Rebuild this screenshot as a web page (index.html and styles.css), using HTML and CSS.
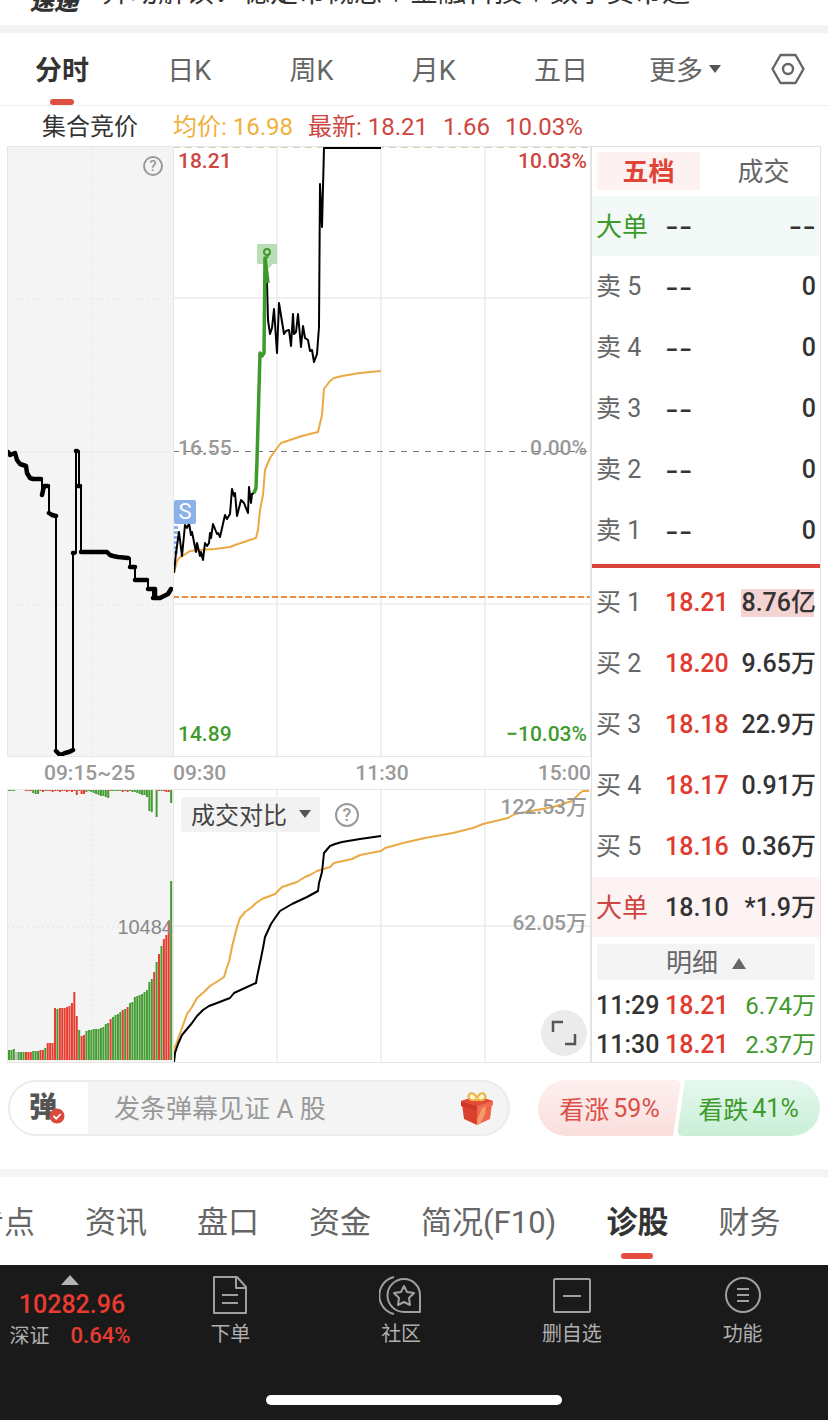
FILE: index.html
```html
<!DOCTYPE html>
<html lang="zh-CN">
<head>
<meta charset="utf-8">
<meta name="viewport" content="width=device-width, initial-scale=1">
<title>分时行情</title>
<link rel="stylesheet" href="styles.css">
</head>
<body>
<div class="page">
  <header class="news">
    <strong class="news-tag">速递</strong>
    <span class="news-text">异动解读：稳定币概念＋金融科技＋数字货币通</span>
  </header>

  <nav class="periods" aria-label="周期">
    <div class="period-list">
      <button class="period active">分时</button>
      <button class="period">日K</button>
      <button class="period">周K</button>
      <button class="period">月K</button>
      <button class="period">五日</button>
    </div>
    <button class="period more">更多<svg width="14" height="11" viewBox="0 0 14 11"><path d="M1 2H13L7 10Z" fill="#555"/></svg></button>
    <button class="settings" aria-label="设置">
      <svg width="34" height="32" viewBox="0 0 34 32" fill="none" stroke="#666" stroke-width="2.4" stroke-linejoin="round"><path d="M9.500 2H24.500L32.500 16L24.500 30H9.500L1.500 16Z"/><circle cx="17" cy="16" r="5"/></svg>
    </button>
  </nav>

  <div class="legend">
    <span class="legend-auction">集合竞价</span>
    <span class="avg">均价: 16.98</span>
    <span class="up">最新: 18.21</span>
    <span class="up">1.66</span>
    <span class="up">10.03%</span>
  </div>

  <main class="market">
    <section class="panel auction">
      <svg class="plot" viewBox="8 147 165 609" preserveAspectRatio="none">
        <g stroke="#e6e6e6" stroke-dasharray="2 3"><path d="M92 147V757M7 299H173M7 605H173"/></g>
        <path d="M7 452H173" stroke="#e9e9e9"/>
        <g fill="none" stroke="#000" stroke-linejoin="round" stroke-linecap="round">
          <path stroke-width="2" d="M42 479V495M49 486V513M56 516V751M73 751V553M76 553V451M79 451V486M81 486V552M130 558V567M135 567V580M148 580V589M153 590V598"/>
          <path stroke-width="4.500" d="M8 452L10 455L15 453L17 460L20 464L26 466L27 473L30 478L33 479H41M42 495L44 486H48M49 513L52 515L56 516M56 751L60 755L65 753L69 752L73 750M73 553H74M76 451H77M78 486H80M81 552H107L110 555L113 556L118 557L128 558M130 567H135M135 580H147M148 589H155V596M153 598H160L164 596L168 594L171 589"/>
        </g>
      </svg>
      <button class="help help-small" aria-label="集合竞价说明">?</button>
    </section>

    <section class="panel price">
      <svg class="plot" viewBox="174 147 416 609" preserveAspectRatio="none" fill="none">
        <path stroke="#ebebeb" stroke-width="1.500" d="M277 147V757M381 147V757M485 147V757M173 298H591M173 604H591"/>
        <path stroke="#dccfb4" stroke-width="2" stroke-dasharray="7 5" d="M173 147H591"/>
        <path stroke="#777" stroke-width="1.200" stroke-dasharray="6 6" d="M173 451.500H591"/>
        <path stroke="#ef8b3c" stroke-width="2" stroke-dasharray="6 3" d="M173 597H591"/>
        <path stroke="#eaa943" stroke-width="2" stroke-linejoin="round" d="M174 573L177 561L180 557L184 555L190 551L200 550L215 549L230 547L235 545L244 542L256 538L258 530L260 510L263 495L265 470L270 458L277 448L281 443L302 436L318 432L322 415L324 389L330 381L334 378L342 376L360 373L381 371"/>
        <path stroke="#8db4ea" stroke-width="4" stroke-dasharray="3 2" d="M176 526V555"/>
        <path stroke="#000" stroke-width="2" stroke-linejoin="round" d="M174 573L176 553L179 532L182 556L185 525L187 528L189 523L191 535L192 532L196 552L197 543L200 556L201 552L203 560L205 543L207 546L209 543L210 533L211 538L213 524L217 534L218 533L220 537L225 515L227 519L230 514L232 489L234 496L235 493L237 516L241 500L244 503L248 513L249 487L251 503L252 494L254 493"/>
        <path stroke="#000" stroke-width="2" stroke-linejoin="round" d="M267 283L268 320L270 334L272 328L274 309L277 353L279 303L284 334L286 331L289 330L291 346L293 314L294 334L296 332L298 314L301 347L303 326L305 338L308 340L310 351L312 350L314 362L317 354L319 327L320 184L322 227L324 148H381"/>
        <rect x="257" y="244" width="20" height="20" rx="1" fill="#b9ddb5"/><path d="M265 264H273L268 269Z" fill="#b9ddb5"/>
        <circle cx="267" cy="252" r="3" stroke="#3f9a2c" stroke-width="2"/><path d="M269 254L266 259" stroke="#3f9a2c" stroke-width="2"/>
        <path stroke="#3f9a2c" stroke-width="3.500" stroke-linejoin="round" d="M254 493L256 488L257 460L260 353L262 356L264 353L265 258L268 283"/>
      </svg>
      <span class="tag at-top at-left up">18.21</span>
      <span class="tag at-top at-right up">10.03%</span>
      <span class="tag at-mid at-left flat">16.55</span>
      <span class="tag at-mid at-right flat">0.00%</span>
      <span class="tag at-bottom at-left down">14.89</span>
      <span class="tag at-bottom at-right down">−10.03%</span>
      <span class="sell-mark">S</span>
    </section>

    <div class="axis axis-auction"><span>09:15~25</span></div>
    <div class="axis axis-day"><span>09:30</span><span>11:30</span><span>15:00</span></div>

    <section class="panel auction-volume">
      <svg class="plot" viewBox="8 790 165 272" preserveAspectRatio="none">
        <path stroke="#e4e4e4" stroke-dasharray="2 3" d="M92 789V1063M7 927H173"/>
        <g id="volume-bars"></g>
      </svg>
      <span class="volume-tag">10484</span>
    </section>

    <section class="panel compare">
      <svg class="plot" viewBox="174 790 416 272" preserveAspectRatio="none" fill="none">
        <path stroke="#ebebeb" stroke-width="1.500" d="M277 789V1063M381 789V1063M485 789V1063M173 926H591"/>
        <path stroke="#eaa943" stroke-width="2" stroke-linejoin="round" d="M174 1062L175 1047L182 1028L187 1014L192 1007L197 998L204 992L210 986L218 981L224 977L227 967L229 962L232 947L237 927L240 918L245 912L252 907L256 903L262 899L275 894L282 887L297 882L305 877L310 875L317 871L330 867L334 863L352 859L360 855L381 851L385 848L403 843L425 838L453 833L473 828L483 824L508 818L515 814L553 807L572 801L580 793L583 791H589"/>
        <path stroke="#000" stroke-width="2" stroke-linejoin="round" d="M174 1062L175 1053L178 1044L182 1035L192 1023L197 1016L203 1010L209 1006L217 1003L230 998L234 993L256 983L257 977L261 958L263 948L265 937L271 924L275 918L280 911L292 904L307 897L318 891L319 883L322 872L324 853L330 846L335 844L342 842L360 839L381 836"/>
      </svg>
      <div class="compare-tools">
        <button class="compare-pick">成交对比<svg width="14" height="10" viewBox="0 0 14 10"><path d="M1 1H13L7 9Z" fill="#555"/></svg></button>
        <button class="help" aria-label="成交对比说明">?</button>
      </div>
      <span class="tag compare-top at-right flat">122.53万</span>
      <span class="tag compare-mid at-right flat">62.05万</span>
      <button class="expand" aria-label="全屏"><svg width="26" height="26" viewBox="0 0 26 26" fill="none" stroke="#555" stroke-width="2.500"><path d="M2 12V2H12M24 14V24H14"/></svg></button>
    </section>

    <aside class="book">
      <div class="book-tabs">
        <button class="book-tab active">五档</button>
        <button class="book-tab">成交</button>
      </div>
      <table class="quotes">
        <tbody>
          <tr class="big big-sell"><th scope="row">大单</th><td class="none">--</td><td class="none">--</td></tr>
          <tr><th scope="row">卖 5</th><td class="none">--</td><td>0</td></tr>
          <tr><th scope="row">卖 4</th><td class="none">--</td><td>0</td></tr>
          <tr><th scope="row">卖 3</th><td class="none">--</td><td>0</td></tr>
          <tr><th scope="row">卖 2</th><td class="none">--</td><td>0</td></tr>
          <tr><th scope="row">卖 1</th><td class="none">--</td><td>0</td></tr>
        </tbody>
      </table>
      <div class="spread"></div>
      <table class="quotes">
        <tbody>
          <tr><th scope="row">买 1</th><td class="bid">18.21</td><td><span class="flash">8.76亿</span></td></tr>
          <tr><th scope="row">买 2</th><td class="bid">18.20</td><td>9.65万</td></tr>
          <tr><th scope="row">买 3</th><td class="bid">18.18</td><td>22.9万</td></tr>
          <tr><th scope="row">买 4</th><td class="bid">18.17</td><td>0.91万</td></tr>
          <tr><th scope="row">买 5</th><td class="bid">18.16</td><td>0.36万</td></tr>
          <tr class="big big-buy"><th scope="row">大单</th><td>18.10</td><td>*1.9万</td></tr>
        </tbody>
      </table>
      <button class="details">明细<svg width="14" height="11" viewBox="0 0 14 11"><path d="M7 0L14 11H0Z" fill="#666"/></svg></button>
      <table class="quotes trades">
        <tbody>
          <tr><td>11:29</td><td class="bid">18.21</td><td class="down">6.74万</td></tr>
          <tr><td>11:30</td><td class="bid">18.21</td><td class="down">2.37万</td></tr>
        </tbody>
      </table>
    </aside>
  </main>

  <section class="social">
    <div class="danmu">
      <button class="danmu-toggle" aria-label="弹幕开关">弹<svg class="check" width="16" height="16" viewBox="0 0 16 16"><circle cx="8" cy="8" r="7.500" fill="#dc4a3b"/><path d="M4.500 8L7.200 10.700L11.700 6" fill="none" stroke="#fff" stroke-width="1.800"/></svg></button>
      <input class="danmu-input" type="text" aria-label="发弹幕" placeholder="发条弹幕见证 A 股">
      <button class="gift" aria-label="礼物">
        <svg width="34" height="36" viewBox="0 0 34 36">
          <path d="M2 14L17 19V35L4 29Z" fill="#d9412f"/><path d="M32 14L17 19V35L30 29Z" fill="#ef6647"/>
          <path d="M1 11L17 6L33 11V15L17 21L1 15Z" fill="#ef6a50"/><path d="M1 11L17 16L33 11L17 6Z" fill="#e34b39"/><path d="M1 11L17 16V21L1 16Z" fill="#cf3829"/>
          <path d="M22 18L26 16.500L25 24L20 34L17 35V30Z" fill="#f59a6c"/>
          <path d="M17 9C12 12 7 9 9 5C11 1 16 4 17 9C18 4 23 1 25 5C27 9 22 12 17 9Z" fill="#fff2d5" stroke="#e9b13d" stroke-width="2"/><circle cx="17" cy="9" r="2" fill="#f1c654"/>
        </svg>
      </button>
    </div>
    <div class="votes">
      <button class="vote bull">看涨<span>59%</span></button>
      <button class="vote bear">看跌<span>41%</span></button>
    </div>
  </section>

  <nav class="sections" aria-label="栏目">
    <a class="section-link" href="#">看点</a>
    <a class="section-link" href="#">资讯</a>
    <a class="section-link" href="#">盘口</a>
    <a class="section-link" href="#">资金</a>
    <a class="section-link" href="#">简况(F10)</a>
    <a class="section-link active" href="#">诊股</a>
    <a class="section-link" href="#">财务</a>
  </nav>

  <footer class="dock">
    <div class="dock-row">
      <button class="index">
        <svg width="18" height="10" viewBox="0 0 18 10"><path d="M9 0L18 10H0Z" fill="#b4b4b4"/></svg>
        <span class="index-value">10282.96</span>
        <span class="index-line"><span class="index-name">深证</span><span class="index-change">0.64%</span></span>
      </button>
      <button class="dock-item">
        <svg width="40" height="40" viewBox="0 0 40 40"><path d="M4 2H27L36 12V38H4ZM26 2V13H36M12 20H28M12 28H28"/></svg>下单
      </button>
      <button class="dock-item">
        <svg width="44" height="40" viewBox="0 0 44 40"><path d="M15 2A19 19 0 0 0 15 39M25 4A16.500 16.500 0 1 0 25 37H41V20A16 16 0 0 0 25 4Z"/><path d="M25 11L28 17L35 18L30 23L31 30L25 27L19 30L20 23L15 18L22 17Z"/></svg>社区
      </button>
      <button class="dock-item">
        <svg width="40" height="40" viewBox="0 0 40 40"><rect x="2" y="4" width="36" height="33" rx="1"/><path d="M11 21H29"/></svg>删自选
      </button>
      <button class="dock-item">
        <svg width="40" height="40" viewBox="0 0 40 40"><circle cx="20" cy="20" r="17"/><path d="M14 14H26M14 20H26M14 26H26"/></svg>功能
      </button>
    </div>
    <div class="home-bar"></div>
  </footer>
</div>
<script src="script.js"></script>
</body>
</html>
```

FILE: styles.css
```css
* { box-sizing: border-box; }
body { margin: 0; background: #fff; color: #333; font-family: Roboto, "Noto Sans CJK SC", sans-serif; }
button { margin: 0; padding: 0; border: 0; background: none; color: inherit; font: inherit; }
svg { display: block; flex: none; }
.page { overflow: hidden; }
.up { color: #cf4540; }
.down { color: #3f9a2c; }
.flat { color: #999; }

.news { display: flex; align-items: flex-end; gap: 24px; height: 33px; padding: 0 30px 10px; border-bottom: 8px solid #f3f3f3; font-size: 28px; line-height: 32px; white-space: nowrap; }
.news-tag { font-size: 24px; font-weight: 900; font-style: italic; line-height: 26px; }
.news-text { padding-bottom: 6px; }

.periods { display: flex; align-items: center; height: 73px; padding: 0 23px 0 35px; border-bottom: 1px solid #eee; font-size: 27px; color: #666; }
.period-list { display: flex; flex: 1; justify-content: space-between; padding-right: 61px; }
.period { position: relative; height: 72px; padding-bottom: 2px; }
.period.active { color: #333; font-weight: 700; }
.period.active::after { content: ""; position: absolute; left: calc(50% - 12px); bottom: 0; width: 24px; height: 6px; border-radius: 3px; background: #df4f40; }
.more { display: flex; align-items: center; gap: 5px; }
.settings { margin-left: 49px; }

.legend { display: flex; align-items: baseline; gap: 15px; height: 40px; padding: 0 7px 0 42px; font-size: 24px; line-height: 42px; white-space: nowrap; }
.legend-auction { width: 116px; color: #333; }
.avg { color: #eeb13c; }

.market { display: grid; grid-template-columns: 166px 1fr 230px; grid-template-rows: 611px 32px 274px; margin: 0 7px; }
.panel { position: relative; border: 1px solid #e6e6e6; }
.plot { position: absolute; inset: 0; width: 100%; height: 100%; }
.auction, .auction-volume { background: #f4f4f4; border-right: 0; }
.tag { position: absolute; font-size: 21px; line-height: 24px; font-weight: 500; }
.at-left { left: 4px; }
.at-right { right: 3px; }
.at-top { top: 2px; }
.at-mid { top: 289px; }
.at-bottom { bottom: 10px; }
.sell-mark { position: absolute; left: 0; top: 353px; width: 22px; height: 24px; border-radius: 2px; background: #8ab1ea; color: #fff; font-size: 22px; line-height: 24px; text-align: center; }
.help { width: 24px; height: 24px; border: 2px solid #999; border-radius: 50%; color: #999; font-size: 18px; line-height: 20px; font-weight: 500; }
.help-small { position: absolute; right: 10px; top: 9px; width: 20px; height: 20px; font-size: 15px; line-height: 16px; }
.axis { display: flex; justify-content: space-between; color: #999; font-size: 21px; font-weight: 500; line-height: 32px; }
.axis-auction { padding-left: 37px; }
.volume-tag { position: absolute; right: 0; top: 125px; color: #888; font: 20px/24px "Liberation Sans", sans-serif; }
.compare-tools { position: absolute; left: 7px; top: 7px; display: flex; align-items: center; gap: 15px; }
.compare-pick { display: flex; align-items: center; gap: 11px; height: 35px; padding: 0 8px 2px 10px; border-radius: 3px; background: #f2f2f2; color: #444; font-size: 24px; }
.compare-top { top: 5px; }
.compare-mid { top: 121px; }
.expand { position: absolute; right: 3px; bottom: 6px; display: grid; place-items: center; width: 46px; height: 46px; border-radius: 50%; background: #ebebeb; }

.book { grid-column: 3; grid-row: 1 / 4; border: 1px solid #e2e2e2; }
.book-tabs { display: grid; grid-template-columns: 1fr 1fr; gap: 12px; padding: 5px 5px 6px; }
.book-tab { height: 38px; padding-top: 2px; border-radius: 3px; color: #666; font-size: 26px; line-height: 36px; }
.book-tab.active { background: #fdf2f1; color: #e04437; font-weight: 700; }
.quotes { width: 100%; border-collapse: collapse; table-layout: fixed; font-size: 25px; line-height: 28px; font-weight: 500; }
.quotes tr { height: 61px; }
.quotes th, .quotes td { padding: 1px 0 0; text-align: left; white-space: nowrap; }
.quotes th { width: 73px; padding-left: 4px; color: #666; font-size: 25px; font-weight: 400; }
.quotes td:last-child { width: 82px; padding-right: 4px; text-align: right; }
.quotes .none { padding-top: 0; font-family: Inter, sans-serif; font-size: 30px; line-height: 24px; font-weight: 400; }
.quotes .bid { color: #e13a2e; }
.quotes .down { color: #3f9a2c; font-size: 24px; font-weight: 400; }
.quotes .big { height: 60px; }
.quotes .big th { font-size: 26px; }
.quotes .big-sell { background: #f3f9f6; }
.quotes .big-sell th { color: #3f9a2c; }
.quotes .big-buy { background: #fdf3f2; }
.quotes .big-buy th { color: #cf4540; }
.spread { height: 4px; margin: 3px 0 4px; background: #d8433a; }
.flash { display: inline-block; background: linear-gradient(#f4d3d3, #f4d3d3) left / calc(100% - 2px) 100% no-repeat; }
.details { display: flex; justify-content: center; align-items: center; gap: 14px; width: calc(100% - 10px); height: 36px; margin: 7px 5px 6px; padding-top: 2px; background: #f4f4f4; color: #666; font-size: 26px; line-height: 34px; }
.trades tr { height: 39px; }
.trades td:first-child { width: 73px; padding-left: 4px; }

.social { display: flex; gap: 28px; padding: 17px 8px 33px; border-bottom: 8px solid #f4f4f4; }
.danmu { display: flex; align-items: center; flex: 1; height: 56px; border: 2px solid #ececec; border-radius: 28px; overflow: hidden; background: #f4f4f4; }
.danmu-toggle { position: relative; width: 78px; height: 52px; padding-right: 12px; background: #fff; color: #555; font-size: 28px; font-weight: 900; line-height: 50px; }
.check { position: absolute; right: 23px; bottom: 10px; }
.danmu-input { flex: 1; min-width: 0; height: 52px; padding: 2px 0 0 26px; border: 0; background: none; font: inherit; font-size: 26px; outline: 0; }
.danmu-input::placeholder { color: #999; opacity: 1; }
.gift { margin-right: 14px; }
.votes { display: flex; }
.vote { display: flex; align-items: center; justify-content: center; gap: 4px; width: 143px; height: 56px; font-size: 25px; }
.bull { border-radius: 28px 6px 6px 28px; background: linear-gradient(#fdf0ef, #f9dedc); color: #dc4f48; clip-path: polygon(0 0, 100% 0, calc(100% - 8px) 100%, 0 100%); }
.bear { margin-left: -4px; border-radius: 6px 28px 28px 6px; background: linear-gradient(#e6f8ee, #c9efd7); color: #3f9a2c; clip-path: polygon(8px 0, 100% 0, 100% 100%, 0 100%); }

.sections { display: flex; gap: 50px; height: 88px; margin-left: -27px; font-size: 31px; line-height: 92px; white-space: nowrap; }
.section-link { position: relative; height: 88px; color: #666; text-decoration: none; }
.section-link.active { color: #333; font-weight: 700; }
.section-link.active::after { content: ""; position: absolute; left: calc(50% - 16px); bottom: 6px; width: 32px; height: 6px; border-radius: 3px; background: #e24d40; }

.dock { display: flex; flex-direction: column; justify-content: space-between; align-items: center; height: 155px; padding: 10px 0 15px; background: #1a1a1a; color: #b0b0b0; }
.dock-row { display: grid; grid-template-columns: 145px repeat(4, 1fr); width: 100%; }
.dock-item { display: flex; flex-direction: column; align-items: center; gap: 4px; font-size: 20px; line-height: 30px; }
.dock-item svg { fill: none; stroke: #a0a0a0; stroke-width: 2; stroke-linejoin: round; }
.index { display: flex; flex-direction: column; align-items: center; width: 140px; line-height: 32px; }
.index-value { margin-right: -4px; color: #ea3b30; font-size: 25px; font-weight: 500; line-height: 40px; }
.index-line { display: flex; gap: 21px; font-size: 20px; line-height: 22px; }
.index-change { color: #ea3b30; font-size: 22px; font-weight: 500; }
.home-bar { width: 296px; height: 10px; border-radius: 5px; background: #fff; }
```

FILE: script.js
```js
// Auction bars: [colour, matched height, unmatched height]
const bars = [
  "g10 1","g10 1","g11 1","n8 0","g8 0","g8 0","g8 0","r8 1","r8 1","r8 1","g9 3","g9 4","g9 4","r10 1","r10 2",
  "g12 1","r17 1","r17 1","r17 2","r52 1","g51 1","r52 2","r52 1","r52 1","r53 2","r54 1","r57 2","r68 1","r44 5",
  "g30 1","r24 4","r25 4","g29 2","g30 1","g30 2","g31 3","g31 4","g31 5","g32 6","g33 6","g36 7","g37 8","r41 1",
  "g43 1","g45 1","g46 1","g48 1","r50 2","g51 1","r53 2","g57 1","g58 2","g63 2","g64 3","g65 4","g66 5","g68 5",
  "g70 7","g78 21","g81 22","r88 0","g98 27","r106 1","g114 1","r121 1","r125 2","r139 2","g179 13"
];
const colours = { g: "#459c32", r: "#e63b2e", n: "#bbb" };
const ns = "http://www.w3.org/2000/svg";
const group = document.getElementById("volume-bars");
const step = 2.42;
bars.forEach((bar, i) => {
  const [matched, unmatched] = bar.slice(1).split(" ").map(Number);
  [[1060 - matched, matched], [789, unmatched + 1]].forEach(([y, h]) => {
    const rect = document.createElementNS(ns, "rect");
    rect.setAttribute("x", 8 + i * step);
    rect.setAttribute("y", y);
    rect.setAttribute("width", 2);
    rect.setAttribute("height", h);
    rect.setAttribute("fill", colours[bar[0]]);
    group.appendChild(rect);
  });
});
```
